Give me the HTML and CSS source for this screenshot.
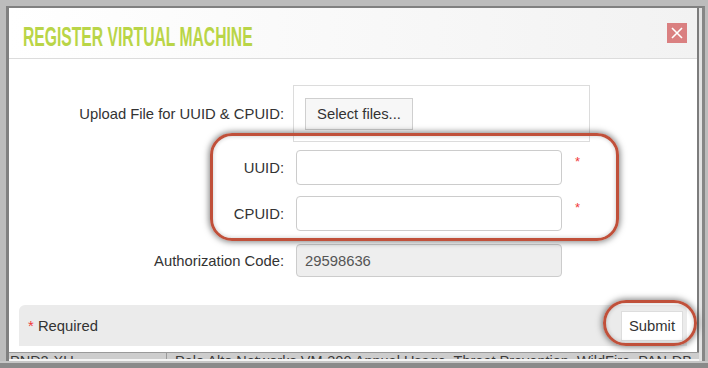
FILE: index.html
```html
<!DOCTYPE html>
<html lang="en">
<head>
<meta charset="utf-8">
<title>Register Virtual Machine</title>
<link rel="stylesheet" href="styles.css">
</head>
<body>
<div class="screen">
  <div class="frame">
    <div class="dialog">
      <header class="dlg-head">
        <h1 class="title"><span class="title-text">REGISTER VIRTUAL MACHINE</span></h1>
        <button class="close" type="button" aria-label="Close">
          <svg width="20" height="20" viewBox="0 0 20 20"><path d="M5 5 L15 15 M15 5 L5 15" stroke="#fff" stroke-width="1.6" fill="none"/></svg>
        </button>
      </header>
      <div class="dlg-body">
        <div class="row row-upload">
          <label class="lbl">Upload File for UUID &amp; CPUID:</label>
          <div class="upload-box"><button class="btn-select" type="button">Select files...</button></div>
        </div>
        <div class="row row-uuid">
          <label class="lbl">UUID:</label>
          <input class="field" type="text">
          <span class="req">*</span>
        </div>
        <div class="row row-cpuid">
          <label class="lbl">CPUID:</label>
          <input class="field" type="text">
          <span class="req">*</span>
        </div>
        <div class="row row-auth">
          <label class="lbl">Authorization Code:</label>
          <input class="field field-ro" type="text" value="29598636" readonly>
        </div>
        <div class="footer">
          <span class="req-note"><span class="req-star">*</span> Required</span>
          <button class="btn-submit" type="button">Submit</button>
        </div>
      </div>
      <div class="mark mark-ids"></div>
      <div class="mark mark-submit"></div>
    </div>
    <div class="table-row">
      <div class="cell cell-a">PND2-XU</div>
      <div class="cell cell-b">Palo Alto Networks VM-300 Annual Usage, Threat Prevention, WildFire, PAN-DB</div>
    </div>
    <div class="frame-gap"></div>
  </div>
  <div class="bottom-strip"></div>
</div>
</body>
</html>
```

FILE: styles.css
```css
* { box-sizing: border-box; }
html, body { margin: 0; padding: 0; }
body { width: 708px; height: 368px; overflow: hidden; font-family: "Liberation Sans", Arial, sans-serif; }

.screen {
  width: 708px;
  height: 368px;
  background: #bcbcbc;
  padding: 6px 3px 0 6px;
  overflow: hidden;
}

.frame {
  border-left: 3px solid #808080;
  border-top: 2px solid #808080;
  border-right: 3px solid #868686;
  padding-right: 3px;
  background: #e2e2e2;
}

.dialog {
  position: relative;
  height: 344px;
  background: #fff;
  border-right: 2px solid #7c7c7c;
}

.dlg-head {
  height: 51px;
  border-bottom: 1px solid #dcdcdc;
  background: linear-gradient(to right, #ffffff, #f2f2f2);
  display: flex;
  align-items: flex-start;
  justify-content: space-between;
  padding: 0 10px 0 14px;
}

.title {
  margin: 0;
  padding-top: 14px;
  font-family: "Liberation Sans", Arial, sans-serif;
  font-weight: bold;
  font-size: 27.5px;
  line-height: 30px;
  color: #b9d547;
  white-space: nowrap;
}
.title-text {
  display: inline-block;
  transform: scaleX(0.57);
  transform-origin: 0 50%;
}

.close {
  margin-top: 15px;
  width: 20px;
  height: 20px;
  padding: 0;
  border: 0;
  background: #da8081;
  display: flex;
}

.dlg-body {
  padding-top: 26px;
  font-size: 14.8px;
  color: #333;
}

.row {
  display: flex;
  align-items: center;
}
.lbl {
  width: 275px;
  text-align: right;
  flex: none;
}
.row-upload { height: 57px; }
.row-uuid { margin-top: 8px; }
.row-cpuid { margin-top: 11px; }
.row-auth { margin-top: 13px; }

.upload-box {
  margin-left: 9px;
  width: 297px;
  height: 57px;
  border: 1px solid #dcdcdc;
  padding: 12px 0 0 11px;
}
.btn-select {
  width: 108px;
  height: 32px;
  border: 1px solid #cfcfcf;
  background: #f7f7f7;
  font-family: inherit;
  font-size: 14.8px;
  color: #333;
  padding: 0;
}

.field {
  margin-left: 12px;
  width: 266px;
  height: 35px;
  border: 1px solid #cccccc;
  border-radius: 4px;
  background: #fff;
  font-family: inherit;
  font-size: 14.8px;
  color: #555;
  padding: 0 8px;
}
.field-ro { background: #eeeeee; height: 33px; }

.req {
  margin-left: 13px;
  color: #f03a3a;
  font-size: 13px;
  align-self: flex-start;
  margin-top: 4px;
}

.footer {
  margin: 28px 10px 0 10px;
  height: 41px;
  background: #ebebeb;
  border-radius: 6px 6px 0 0;
  display: flex;
  align-items: center;
  justify-content: space-between;
  padding: 0 4px 0 9px;
}
.req-star { color: #f03a3a; }
.btn-submit {
  width: 62px;
  height: 30px;
  border: 1px solid #dddddd;
  background: #fff;
  font-family: inherit;
  font-size: 14.8px;
  color: #333;
  padding: 0;
}

.mark {
  position: absolute;
  border: 3px solid #c0503a;
  box-shadow: 0 0 6px 1px rgba(0,0,0,0.5), inset 0 0 4px rgba(0,0,0,0.22);
}
.mark-ids {
  left: 201px;
  top: 125px;
  width: 409px;
  height: 108px;
  border-radius: 22px;
}
.mark-submit {
  left: 594px;
  top: 292px;
  width: 94px;
  height: 46px;
  border-radius: 23px;
}

.table-row {
  height: 7px;
  border-top: 1px solid #9a9a9a;
  background: #cdcdcd;
  display: flex;
  overflow: hidden;
  font-size: 14.5px;
  color: #3a3a3a;
  line-height: 16px;
}
.cell { white-space: nowrap; overflow: hidden; }
.cell-a { width: 158px; padding-left: 1px; border-right: 1px solid #9a9a9a; }
.cell-b { padding-left: 8px; }

.frame-gap { height: 2px; background: #f4f4f4; }

.bottom-strip {
  margin: 0 -3px 0 -6px;
  height: 10px;
  border-top: 2px solid #c6c6c6;
  background: #8a8a8a;
}
```
